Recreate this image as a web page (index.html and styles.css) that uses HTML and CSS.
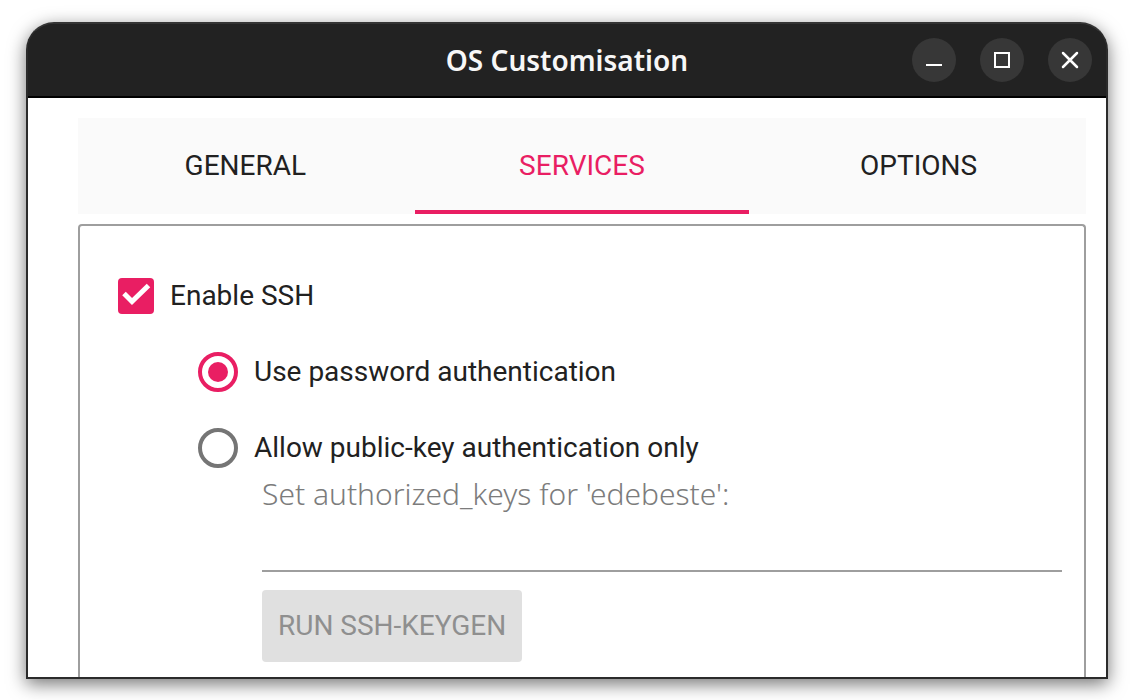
FILE: index.html
```html
<!DOCTYPE html>
<html lang="en">
<head>
<meta charset="utf-8">
<title>OS Customisation</title>
<link rel="stylesheet" href="styles.css">
</head>
<body>
<div class="window">
  <header class="titlebar">
    <h1 class="title">OS Customisation</h1>
    <div class="window-buttons">
      <button class="window-button" type="button" aria-label="Minimise">
        <svg viewBox="0 0 44 44"><path d="M14 27h16"/></svg>
      </button>
      <button class="window-button" type="button" aria-label="Maximise">
        <svg viewBox="0 0 44 44"><path d="M15 15h14v14h-14z"/></svg>
      </button>
      <button class="window-button" type="button" aria-label="Close">
        <svg viewBox="0 0 44 44"><path class="cross" d="M15 15l14 14M29 15l-14 14"/></svg>
      </button>
    </div>
  </header>
  <main class="content">
    <div class="tabs" role="tablist">
      <button class="tab" type="button" role="tab" aria-selected="false">GENERAL</button>
      <button class="tab tab-active" type="button" role="tab" aria-selected="true">SERVICES</button>
      <button class="tab" type="button" role="tab" aria-selected="false">OPTIONS</button>
    </div>
    <form class="panel">
      <label class="option"><input class="checkbox" type="checkbox" checked>Enable SSH</label>
      <div class="methods">
        <label class="option"><input class="radio" type="radio" name="auth" checked>Use password authentication</label>
        <label class="option"><input class="radio" type="radio" name="auth">Allow public-key authentication only</label>
      </div>
      <div class="keys">
        <label class="keys-label" for="keys">Set authorized_keys for 'edebeste':</label>
        <input class="keys-input" id="keys" type="text" disabled>
        <button class="keygen" type="button" disabled>RUN SSH-KEYGEN</button>
      </div>
    </form>
  </main>
</div>
</body>
</html>
```
FILE: styles.css
```css
* {
  box-sizing: border-box;
}

body {
  display: flex;
  height: 100vh;
  margin: 0;
  padding: 22px 26px 21px;
  background: #fff;
  color: #212121;
  font: 28px/40px Roboto, sans-serif;
}

button,
input {
  margin: 0;
  font: inherit;
}

.window {
  display: flex;
  flex: 1;
  flex-direction: column;
  min-width: 0;
  overflow: hidden;
  border: 2px solid #2b2b2b;
  border-top-color: #343434;
  border-radius: 28px 28px 0 0;
  background: linear-gradient(#222 76px, #fff 76px);
  box-shadow: 0 5px 18px rgba(0, 0, 0, 0.55);
}

.titlebar {
  display: grid;
  grid-template-columns: 1fr auto 1fr;
  align-items: center;
  padding: 14px;
  border-bottom: 2px solid #000;
  background: #222;
}

.title {
  grid-column: 2;
  margin: 0;
  color: #f7f7f7;
  font: 600 28px/40px "Noto Sans", sans-serif;
}

.window-buttons {
  display: flex;
  gap: 24px;
  justify-self: end;
}

.window-button {
  width: 44px;
  height: 44px;
  padding: 0;
  border: 0;
  border-radius: 50%;
  background: #373737;
}

.window-button svg {
  display: block;
  fill: none;
  stroke: #fff;
  stroke-width: 2;
}

.window-button .cross {
  stroke-width: 2.5;
  stroke-linecap: round;
}

.content {
  display: flex;
  flex: 1;
  flex-direction: column;
  gap: 10px;
  min-height: 0;
  padding: 20px 20px 0 50px;
  background: #fff;
}

.tabs {
  display: grid;
  grid-template-columns: repeat(3, 1fr);
  gap: 2px;
  background: #fafafa;
}

.tab {
  height: 96px;
  padding: 0;
  border: 0;
  background: none;
  color: #212121;
}

.tab-active {
  box-shadow: inset 0 -4px #e91e63;
  color: #e91e63;
}

.panel {
  flex: 1;
  min-height: 0;
  padding: 50px 22px 0 38px;
  border: 2px solid #9e9e9e;
  border-bottom: 0;
  border-radius: 4px 4px 0 0;
}

.option {
  display: flex;
  gap: 16px;
  align-items: center;
}

.methods {
  display: grid;
  gap: 36px;
  margin-top: 36px;
  padding-left: 80px;
}

.checkbox,
.radio {
  flex: none;
  appearance: none;
}

.checkbox {
  width: 36px;
  height: 36px;
  border: 4px solid #757575;
  border-radius: 4px;
}

.checkbox:checked {
  border: 0;
  background: #e91e63 url("data:image/svg+xml,%3Csvg xmlns='http://www.w3.org/2000/svg' viewBox='0 0 36 36'%3E%3Cpath d='M6 15.5l8 8L30.5 7.5' fill='none' stroke='white' stroke-width='5'/%3E%3C/svg%3E");
}

.radio {
  width: 40px;
  height: 40px;
  border: 4px solid #757575;
  border-radius: 50%;
}

.radio:checked {
  padding: 6px;
  border-color: #e91e63;
}

.radio:checked::before {
  display: block;
  width: 20px;
  height: 20px;
  border-radius: 50%;
  background: #e91e63;
  content: "";
}

.keys {
  display: flex;
  flex-direction: column;
  align-items: flex-start;
  margin-top: 6px;
  padding-left: 144px;
}

.keys-label {
  color: #7c7c7c;
  font: 300 30px/40px "Noto Sans", sans-serif;
}

.keys-input {
  width: 100%;
  height: 58px;
  padding: 0;
  border: 0;
  border-bottom: 2px solid #9e9e9e;
  background: none;
}

.keygen {
  height: 72px;
  margin-top: 18px;
  padding: 0 16px;
  border: 0;
  border-radius: 4px;
  background: #e0e0e0;
  color: #8f8f8f;
}
```
